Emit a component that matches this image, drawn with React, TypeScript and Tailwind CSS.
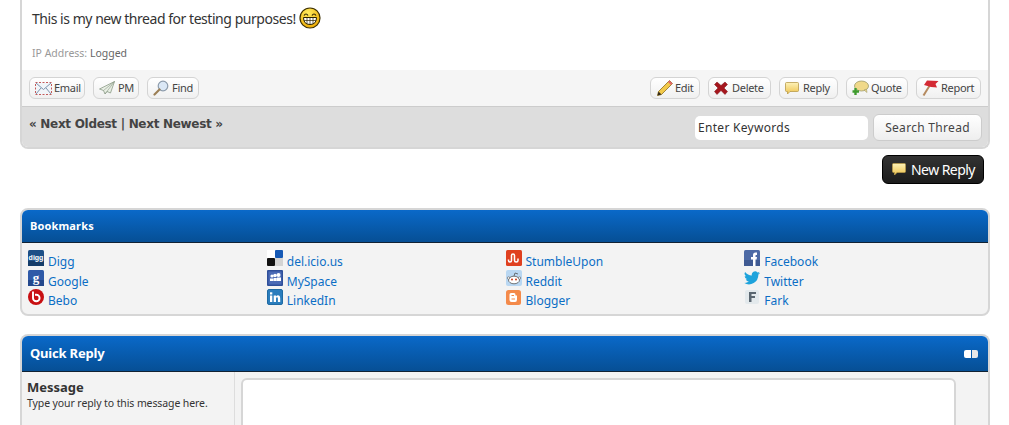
import React from 'react';

const IconGrin = () => (
  <svg width="22" height="22" viewBox="0 0 22 22" className="shrink-0">
    <defs>
      <radialGradient id="grin" cx="40%" cy="25%" r="80%">
        <stop offset="0" stopColor="#ffec5e" />
        <stop offset="1" stopColor="#eda800" />
      </radialGradient>
    </defs>
    <circle cx="11" cy="11" r="10" fill="url(#grin)" stroke="#3d3000" strokeWidth="1.2" />
    <path d="M5 8.5 Q7 5.5 9 8.5 M13 8.5 Q15 5.5 17 8.5" fill="none" stroke="#2b2200" strokeWidth="1.2" />
    <path d="M4.5 10.5 H17.5 Q17.5 17.5 11 17.5 Q4.5 17.5 4.5 10.5 Z" fill="#fff" stroke="#2b2200" strokeWidth="1" />
    <path d="M8 10.5 V17 M11 10.5 V17.5 M14 10.5 V17 M5 13.5 H17" stroke="#2b2200" strokeWidth="0.7" />
  </svg>
);

const IconMail = () => (
  <svg width="17" height="13" viewBox="0 0 17 13">
    <rect x="0.5" y="0.5" width="16" height="12" fill="#f1f5f9" stroke="#c35b5b" strokeDasharray="2 1.5" />
    <path d="M1 1 L8.5 7.5 L16 1 M1 12 L6 6 M16 12 L11 6" fill="none" stroke="#7d93ad" />
  </svg>
);

const IconPlane = () => (
  <svg width="16" height="14" viewBox="0 0 16 14">
    <path d="M15.5 0.5 L0.5 8 L4.5 9.5 L6 13 L8 10.5 L11.5 12 Z" fill="#e8eee4" stroke="#8a9a86" strokeWidth="0.8" />
    <path d="M15.5 0.5 L4.5 9.5 M15.5 0.5 L6 13" stroke="#8a9a86" strokeWidth="0.6" />
  </svg>
);

const IconFind = () => (
  <svg width="16" height="16" viewBox="0 0 16 16">
    <circle cx="10" cy="6" r="4.8" fill="#dbe8f6" stroke="#8c9bab" strokeWidth="1.2" />
    <path d="M6.5 9.5 L1.5 14.5" stroke="#9b7f55" strokeWidth="2.2" strokeLinecap="round" />
  </svg>
);

const IconEdit = () => (
  <svg width="18" height="18" viewBox="0 0 18 18">
    <path d="M13.5 1.5 L16.5 4.5 L5.5 15.5 L1.5 16.5 L2.5 12.5 Z" fill="#f2c94a" stroke="#8d6e1f" strokeWidth="0.8" />
    <path d="M13.5 1.5 L16.5 4.5 L15 6 L12 3 Z" fill="#e2656b" />
    <path d="M2.5 12.5 L1.5 16.5 L5.5 15.5 Z" fill="#33291a" />
  </svg>
);

const IconDelete = () => (
  <svg width="14" height="14" viewBox="0 0 14 14">
    <path d="M3 1 L7 4.5 L11 1 L13.5 3.5 L10 7 L13.5 10.5 L11 13.5 L7 9.5 L3 13.5 L0.5 10.5 L4 7 L0.5 3.5 Z" fill="#a5161d" stroke="#7d0e12" strokeWidth="0.5" />
  </svg>
);

const Bubble = () => (
  <svg width="14" height="13" viewBox="0 0 14 13">
    <defs>
      <linearGradient id="bubble" x1="0" y1="0" x2="0" y2="1">
        <stop offset="0" stopColor="#fdf2b8" />
        <stop offset="1" stopColor="#eec24c" />
      </linearGradient>
    </defs>
    <path d="M1.5 0.5 H12.5 Q13.5 0.5 13.5 1.5 V8.5 Q13.5 9.5 12.5 9.5 H5 L2.5 12 V9.5 H1.5 Q0.5 9.5 0.5 8.5 V1.5 Q0.5 0.5 1.5 0.5 Z" fill="url(#bubble)" stroke="#b79a4a" strokeWidth="0.8" />
  </svg>
);

const IconQuote = () => (
  <svg width="17" height="16" viewBox="0 0 17 16">
    <ellipse cx="9.5" cy="6" rx="7" ry="5" fill="#f0d98a" stroke="#9d9a6c" strokeWidth="0.8" />
    <path d="M12 10 L15 12.5 L14.5 9 Z" fill="#f0d98a" stroke="#9d9a6c" strokeWidth="0.6" />
    <path d="M3.5 8 V15 M0.5 11.5 H7" stroke="#3f9b2e" strokeWidth="2.4" />
  </svg>
);

const IconFlag = () => (
  <svg width="17" height="16" viewBox="0 0 17 16">
    <path d="M8 5 L1.5 15.5" stroke="#b58a5f" strokeWidth="2" />
    <path d="M5 0.5 L16.5 1 L13.5 4 L15 7.5 L9 7 L2 5 Z" fill="#d42a34" />
  </svg>
);

const Digg = () => (
  <svg width="16" height="16" viewBox="0 0 16 16">
    <rect width="16" height="16" rx="1.5" fill="#1d4f86" />
    <rect y="11" width="16" height="5" fill="#143c69" />
    <text x="8" y="10" textAnchor="middle" fontSize="7" fontWeight="700" fill="#fff" fontFamily="Liberation Sans">digg</text>
  </svg>
);
const Google = () => (
  <svg width="16" height="16" viewBox="0 0 16 16">
    <rect width="16" height="16" rx="1.5" fill="#2f5aa8" />
    <rect y="10" width="16" height="6" fill="#24488c" />
    <text x="8" y="11.5" textAnchor="middle" fontSize="13" fontWeight="700" fill="#fff" fontFamily="Liberation Serif">g</text>
  </svg>
);
const Bebo = () => (
  <svg width="16" height="16" viewBox="0 0 16 16">
    <circle cx="8" cy="8" r="8" fill="#c80f12" />
    <path d="M5 2.5 V9 A3.3 3.3 0 1 0 8.3 5.7 H7" fill="none" stroke="#fff" strokeWidth="1.9" />
  </svg>
);
const Delicious = () => (
  <svg width="16" height="16" viewBox="0 0 16 16">
    <rect x="8" width="8" height="8" rx="1" fill="#1659b5" />
    <rect width="8" height="8" fill="#fff" />
    <rect y="8" width="8" height="8" rx="1" fill="#111" />
    <rect x="8" y="8" width="8" height="8" fill="#d3d3d3" />
  </svg>
);
const MySpace = () => (
  <svg width="16" height="16" viewBox="0 0 16 16">
    <rect width="16" height="16" rx="1" fill="#2f4f9a" />
    <rect x="1.5" y="1.5" width="13" height="13" fill="#4a6ab5" />
    <circle cx="5" cy="6" r="1.6" fill="#fff" />
    <circle cx="8" cy="5.5" r="1.8" fill="#fff" />
    <circle cx="11.5" cy="5" r="2" fill="#fff" />
    <path d="M3 11 V8.5 H6.5 V11 Z M6.8 11 V8 H9.8 V11 Z M10 11 V7.5 H14 V11 Z" fill="#fff" />
  </svg>
);
const LinkedIn = () => (
  <svg width="16" height="16" viewBox="0 0 16 16">
    <rect x="0.5" y="0.5" width="15" height="15" rx="1.5" fill="#2a7dbd" stroke="#1f6aa3" />
    <rect x="3" y="6.5" width="2.3" height="6.5" fill="#fff" />
    <rect x="3" y="3.3" width="2.3" height="2.2" fill="#fff" />
    <path d="M6.7 6.5 H9 V7.5 Q9.8 6.3 11.2 6.3 Q13.2 6.3 13.2 9 V13 H10.9 V9.5 Q10.9 8.3 10 8.3 Q9 8.3 9 9.5 V13 H6.7 Z" fill="#fff" />
  </svg>
);
const Stumble = () => (
  <svg width="16" height="16" viewBox="0 0 16 16">
    <rect width="16" height="16" rx="1.5" fill="#e0401f" />
    <path d="M2.5 9.5 V10.5 Q2.5 12 4 12 Q5.5 12 5.5 10.5 V5.5 Q5.5 4 7 4 Q8.5 4 8.5 5.5 V10.5 Q8.5 12 10.2 12 Q12 12 12 10.5 V8.5" fill="none" stroke="#fff" strokeWidth="1.5" />
  </svg>
);
const Reddit = () => (
  <svg width="16" height="16" viewBox="0 0 16 16">
    <rect width="16" height="16" rx="2" fill="#b9d7f2" />
    <ellipse cx="8" cy="10" rx="5.5" ry="3.8" fill="#fff" stroke="#555" strokeWidth="0.8" />
    <circle cx="6" cy="9.5" r="1" fill="#c8401f" />
    <circle cx="10" cy="9.5" r="1" fill="#c8401f" />
    <path d="M8 6 L9 3 L12 4" fill="none" stroke="#555" strokeWidth="0.8" />
    <circle cx="2.5" cy="8" r="1.2" fill="#fff" stroke="#555" strokeWidth="0.6" />
    <circle cx="13.5" cy="8" r="1.2" fill="#fff" stroke="#555" strokeWidth="0.6" />
  </svg>
);
const Blogger = () => (
  <svg width="15" height="15" viewBox="0 0 15 15">
    <rect width="15" height="15" rx="2.5" fill="#f48a4a" />
    <path d="M5 3 H8 Q9.5 3 9.5 5 V5.5 H11 V9.5 Q11 12 9 12 H5.5 Q3.5 12 3.5 10 V4.5 Q3.5 3 5 3 Z" fill="#fff" />
    <path d="M5.5 5.5 H8 M5.5 9 H9" stroke="#f48a4a" strokeWidth="1.2" />
  </svg>
);
const Facebook = () => (
  <svg width="16" height="16" viewBox="0 0 16 16">
    <rect width="16" height="16" rx="1.5" fill="#4d6aa5" />
    <rect y="10" width="16" height="6" fill="#3f5a92" />
    <path d="M9 16 V9.5 H7 V7 H9 V5 Q9 2.5 11.5 2.5 H13 V5 H12 Q11.5 5 11.5 5.7 V7 H13 L12.6 9.5 H11.5 V16 Z" fill="#fff" />
  </svg>
);
const Twitter = () => (
  <svg width="17" height="14" viewBox="0 0 24 20">
    <path d="M24 2.4a9.8 9.8 0 0 1-2.8.8A5 5 0 0 0 23.3.5a9.9 9.9 0 0 1-3.1 1.2 4.9 4.9 0 0 0-8.4 4.5A14 14 0 0 1 1.7.9a4.9 4.9 0 0 0 1.5 6.6 4.9 4.9 0 0 1-2.2-.6 4.9 4.9 0 0 0 3.9 4.9 4.9 4.9 0 0 1-2.2.1 4.9 4.9 0 0 0 4.6 3.4A9.9 9.9 0 0 1 0 17.3 14 14 0 0 0 21.5 4.9 10 10 0 0 0 24 2.4Z" fill="#1ea3dc" />
  </svg>
);
const Fark = () => (
  <svg width="14" height="14" viewBox="0 0 14 14">
    <rect width="14" height="14" rx="2" fill="#e3e9ec" />
    <path d="M4 2 H11 V4 H6.5 V6 H10 V8 H6.5 V12 H4 Z" fill="#5a6670" />
  </svg>
);

const ToolButton = ({ icon, label, className }: { icon: React.ReactNode; label: string; className: string }) => (
  <a className={`flex h-[22px] items-center rounded-[6px] border border-[#d4d4d4] bg-gradient-to-b from-white to-[#f0f0f0] pl-[5px] text-[11px] tracking-[-0.3px] text-[#444] ${className}`}>
    {icon}
    <span>{label}</span>
  </a>
);

const bookmarks = [
  [
    { name: 'Digg', icon: <Digg /> },
    { name: 'Google', icon: <Google /> },
    { name: 'Bebo', icon: <Bebo /> },
  ],
  [
    { name: 'del.icio.us', icon: <Delicious /> },
    { name: 'MySpace', icon: <MySpace /> },
    { name: 'LinkedIn', icon: <LinkedIn /> },
  ],
  [
    { name: 'StumbleUpon', icon: <Stumble /> },
    { name: 'Reddit', icon: <Reddit /> },
    { name: 'Blogger', icon: <Blogger /> },
  ],
  [
    { name: 'Facebook', icon: <Facebook /> },
    { name: 'Twitter', icon: <Twitter /> },
    { name: 'Fark', icon: <Fark /> },
  ],
];

const App = () => {
  return (
    <div className="h-[425px] w-[1009px] overflow-hidden bg-white pl-[20px] font-['Noto_Sans',sans-serif] text-[#333]">
      <div className="w-[970px]">
        {/* Post */}
        <div className="overflow-hidden rounded-b-[8px] border-2 border-t-0 border-[#d6d6d6]">
          <div className="h-[70px] bg-white pl-[10px] pt-[6px]">
            <div className="flex h-[24px] items-center gap-[3px] text-[14px] tracking-[-0.46px] text-[#333]">
              <span>This is my new thread for testing purposes!</span>
              <IconGrin />
            </div>
            <div className="mt-[16px] text-[10.5px] text-[#999]">
              IP Address: <span className="text-[#666]">Logged</span>
            </div>
          </div>
          <div className="flex h-[36px] items-center justify-between bg-[#f5f5f5] pl-[7px] pr-[7px]">
            <div className="flex gap-[8px]">
              <ToolButton icon={<IconMail />} label="Email" className="w-[56px] gap-[2px]" />
              <ToolButton icon={<IconPlane />} label="PM" className="w-[46px] gap-[3px]" />
              <ToolButton icon={<IconFind />} label="Find" className="w-[52px] gap-[3px]" />
            </div>
            <div className="flex gap-[8px]">
              <ToolButton icon={<IconEdit />} label="Edit" className="w-[50px] gap-[1px]" />
              <ToolButton icon={<IconDelete />} label="Delete" className="w-[63px] gap-[4px]" />
              <ToolButton icon={<Bubble />} label="Reply" className="w-[59px] gap-[4px]" />
              <ToolButton icon={<IconQuote />} label="Quote" className="w-[62px] gap-[2px]" />
              <ToolButton icon={<IconFlag />} label="Report" className="w-[65px] gap-[2px]" />
            </div>
          </div>
          <div className="flex h-[41px] items-start justify-between border-t border-[#ccc] bg-[#ddd] pl-[7px] pr-[6px]">
            <div className="mt-[8px] font-['DejaVu_Sans',sans-serif] text-[12px] font-bold tracking-[-0.3px] text-[#444]">« Next Oldest | Next Newest »</div>
            <div className="mt-[7px] flex gap-[5px]">
              <div className="mt-[2px] flex h-[24px] w-[173px] items-center rounded-[5px] bg-white pl-[3px] text-[12px] tracking-[0.3px] text-[#333]">Enter Keywords</div>
              <div className="flex h-[27px] w-[109px] items-center justify-center rounded-[6px] border border-[#ccc] bg-gradient-to-b from-white to-[#eee] text-[12px] tracking-[0.3px] text-[#444]">Search Thread</div>
            </div>
          </div>
        </div>

        <div className="mt-[6px] flex justify-end pr-[6px]">
          <a className="flex h-[29px] w-[102px] items-center gap-[5px] rounded-[6px] border border-black bg-gradient-to-b from-[#333] to-[#1c1c1c] pl-[9px] text-[14px] tracking-[-0.55px] text-white">
            <Bubble />
            New Reply
          </a>
        </div>

        {/* Bookmarks */}
        <div className="mt-[24px] overflow-hidden rounded-[8px] border-2 border-[#d6d6d6] bg-[#f3f3f3]">
          <div className="flex h-[33px] items-center border-b border-[#123] bg-gradient-to-b from-[#0a69c9] to-[#064f95] pl-[8px] text-[11px] font-bold tracking-[0.15px] text-white">
            Bookmarks
          </div>
          <div className="grid h-[71px] grid-cols-4 pl-[6px] pr-[5px] pt-[7px]">
            {bookmarks.map((col) => (
              <div key={col[0].name} className="flex flex-col">
                {col.map((b) => (
                  <a key={b.name} className="flex h-[19.5px] items-start gap-[4px] text-[12px] text-[#0b6ec5]">
                    <span className="flex h-[16px] w-[16px] items-center justify-center">{b.icon}</span>
                    <span className="mt-[4px] leading-[16px]">{b.name}</span>
                  </a>
                ))}
              </div>
            ))}
          </div>
        </div>

        {/* Quick reply */}
        <div className="mt-[18px] overflow-hidden rounded-t-[8px] border-2 border-b-0 border-[#d6d6d6] bg-[#f3f3f3]">
          <div className="flex h-[36px] items-center justify-between border-b border-[#123] bg-gradient-to-b from-[#0a69c9] to-[#064f95] pl-[8px] pr-[10px] text-[13px] font-bold tracking-[-0.2px] text-white">
            Quick Reply
            <span className="flex h-[8px] w-[14px] overflow-hidden rounded-[2px]">
              <span className="w-1/2 bg-white" />
              <span className="ml-px flex-1 bg-[#e8e8e8]" />
            </span>
          </div>
          <div className="flex h-[60px]">
            <div className="w-[213px] border-r border-[#ddd] pl-[5px] pt-[7px]">
              <div className="text-[13px] font-bold leading-[16px] text-[#333]">Message</div>
              <div className="mt-px text-[10.5px] leading-[14px] tracking-[-0.1px] text-[#333]">Type your reply to this message here.</div>
            </div>
            <div className="pl-[6px] pt-[6px]">
              <div className="h-[80px] w-[715px] rounded-[6px] border-2 border-[#d6d6d6] bg-white" />
            </div>
          </div>
        </div>
      </div>
    </div>
  );
};

export default App;
